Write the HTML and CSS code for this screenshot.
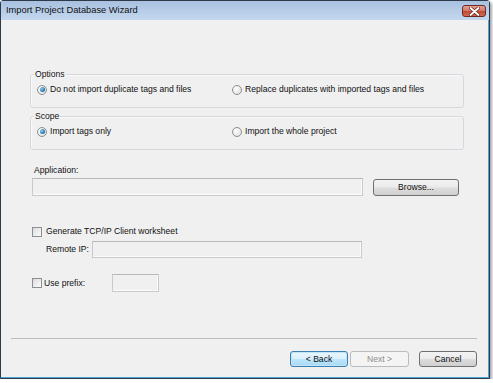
FILE: index.html
```html
<!DOCTYPE html>
<html lang="en">
<head>
    <meta charset="UTF-8">
    <title>Import Project Database Wizard</title>
    <link rel="stylesheet" href="styles.css">
</head>
<body>
    <div class="window">
        <div class="titlebar">
            <span class="title">Import Project Database Wizard</span>
            <span class="close">
                <svg width="11" height="9" viewBox="0 0 11 9">
                    <path d="M1.5 1 L9.5 8 M9.5 1 L1.5 8" stroke="#6b2a22" stroke-width="3.4" stroke-linecap="round"/>
                    <path d="M1.5 1 L9.5 8 M9.5 1 L1.5 8" stroke="#ffffff" stroke-width="1.8" stroke-linecap="round"/>
                </svg>
            </span>
        </div>
        <div class="content">
            <div class="page">
                <fieldset class="group first">
                    <legend>Options</legend>
                    <div class="choices">
                        <label class="radio checked"><span class="dot"></span>Do not import duplicate tags and files</label>
                        <label class="radio"><span class="dot"></span>Replace duplicates with imported tags and files</label>
                    </div>
                </fieldset>
                <fieldset class="group">
                    <legend>Scope</legend>
                    <div class="choices">
                        <label class="radio checked"><span class="dot"></span>Import tags only</label>
                        <label class="radio"><span class="dot"></span>Import the whole project</label>
                    </div>
                </fieldset>

                <div class="field-label">Application:</div>
                <div class="app-row">
                    <span class="textbox app-box"></span>
                    <span class="button browse">Browse...</span>
                </div>

                <div class="check-row tcp-row">
                    <span class="box"></span>
                    <span>Generate TCP/IP Client worksheet</span>
                </div>
                <div class="ip-row">
                    <span class="ip-label">Remote IP:</span>
                    <span class="textbox ip-box"></span>
                </div>
                <div class="check-row prefix-row">
                    <span class="box"></span>
                    <span class="prefix-label">Use prefix:</span>
                    <span class="textbox prefix-box"></span>
                </div>
            </div>
            <div class="footer">
                <div class="separator"></div>
                <div class="buttons">
                    <span class="button default">&lt; Back</span>
                    <span class="button disabled">Next &gt;</span>
                    <span class="button cancel">Cancel</span>
                </div>
            </div>
        </div>
    </div>
</body>
</html>
```

FILE: styles.css
```css
body {
    margin: 0;
    background: #ffffff;
    font-family: "Liberation Sans", Arial, sans-serif;
    font-size: 8.6px;
    line-height: 11px;
    color: #111;
}
.window {
    width: 490px;
    height: 379px;
    box-sizing: border-box;
    border: 1px solid #2e3a47;
    border-radius: 3px 3px 0 0;
    box-shadow: 2px 2px 3px rgba(0, 0, 0, 0.35);
    display: flex;
    flex-direction: column;
    background: #b9cfea;
}
.titlebar {
    height: 19px;
    display: flex;
    justify-content: space-between;
    background: linear-gradient(#a8c1e0, #c4d7ee);
}
.title {
    padding-left: 5px;
    line-height: 19px;
    font-size: 9.3px;
    color: #111;
}
.close {
    width: 24px;
    height: 12px;
    margin: 4px 3px 0 0;
    box-sizing: border-box;
    border: 1px solid #6e2a22;
    border-radius: 3px;
    background: linear-gradient(#e3a193 0%, #d47a69 45%, #c24a36 55%, #d06a52 100%);
    display: flex;
    align-items: center;
    justify-content: center;
}
.content {
    flex: 1;
    display: flex;
    flex-direction: column;
    background: #f0f0f0;
    border-right: 1px solid #4ea4d4;
    border-bottom: 1px solid #4ea4d4;
}
.page {
    padding: 0 24px 0 29px;
}

/* group boxes */
.group {
    margin: 3px 0 0 0;
    padding: 4px 0 12px 6px;
    border: 1px solid #d5d9dd;
    border-radius: 3px;
    box-shadow: inset 1px 1px 0 #fafafa;
}
.group.first {
    margin-top: 49px;
}
.group legend {
    padding: 0 1px;
    margin-left: -3px;
    line-height: 11px;
}
.choices {
    display: grid;
    grid-template-columns: 195px 1fr;
}
.radio {
    display: flex;
    align-items: center;
    gap: 3px;
    height: 11px;
}
.dot {
    width: 10px;
    height: 10px;
    box-sizing: border-box;
    border: 1px solid #8c8f91;
    border-radius: 50%;
    background: radial-gradient(circle at 35% 35%, #fdfdfd, #dcdcdc);
    display: flex;
    align-items: center;
    justify-content: center;
}
.radio.checked .dot::after {
    content: "";
    width: 5px;
    height: 5px;
    border-radius: 50%;
    background: radial-gradient(circle at 35% 35%, #8fd0f3, #1f6ea6 70%, #174f7a);
}

/* application */
.field-label {
    margin: 15px 0 0 4px;
}
.app-row {
    margin: 2px 0 0 2px;
    display: flex;
    align-items: center;
    gap: 10px;
    height: 18px;
}
.textbox {
    box-sizing: border-box;
    border: 1px solid #c9c9c9;
    border-top-color: #b8b8b8;
    background: #f0f0f0;
    box-shadow: inset -1px -1px 0 #fbfbfb;
}
.app-box {
    width: 331px;
    height: 18px;
}
.button {
    box-sizing: border-box;
    height: 16px;
    border: 1px solid #707070;
    border-radius: 3px;
    background: linear-gradient(#f3f3f3 0%, #ebebeb 48%, #dddddd 52%, #cfcfcf 100%);
    display: flex;
    align-items: center;
    justify-content: center;
    color: #111;
}
.browse {
    width: 86px;
    height: 17px;
}

/* checkboxes */
.check-row {
    display: flex;
    align-items: center;
    margin-left: 2px;
}
.tcp-row {
    margin-top: 30px;
    height: 11px;
    gap: 4px;
}
.box {
    width: 10px;
    height: 10px;
    box-sizing: border-box;
    border: 1px solid #8c8f91;
    background: linear-gradient(135deg, #dcdcdc, #fbfbfb);
}
.ip-row {
    margin: 4px 0 0 2px;
    display: flex;
    align-items: center;
    gap: 3px;
    height: 17px;
}
.ip-label {
    width: 57px;
    text-align: right;
}
.ip-box {
    width: 270px;
    height: 17px;
}
.prefix-row {
    margin-top: 16px;
    height: 18px;
    gap: 2px;
}
.prefix-label {
    width: 66px;
}
.prefix-box {
    width: 47px;
    height: 18px;
}

/* footer */
.footer {
    margin-top: auto;
    padding: 0 11px 10px 10px;
}
.separator {
    border-top: 1px solid #bcbcbc;
}
.buttons {
    margin-top: 12px;
    display: flex;
    justify-content: flex-end;
}
.buttons .button {
    width: 58px;
}
.button.default {
    margin-right: 2px;
    border-color: #3c7fb1;
    background: linear-gradient(#eaf6fd 0%, #d9f0fc 48%, #bee6fd 52%, #a7d9f5 100%);
    box-shadow: inset 0 0 0 1px #c4e5f6;
}
.button.disabled {
    width: 59px;
    margin-right: 10px;
    border-color: #b8bcbf;
    background: #f4f4f4;
    color: #8d8d8d;
}
```
